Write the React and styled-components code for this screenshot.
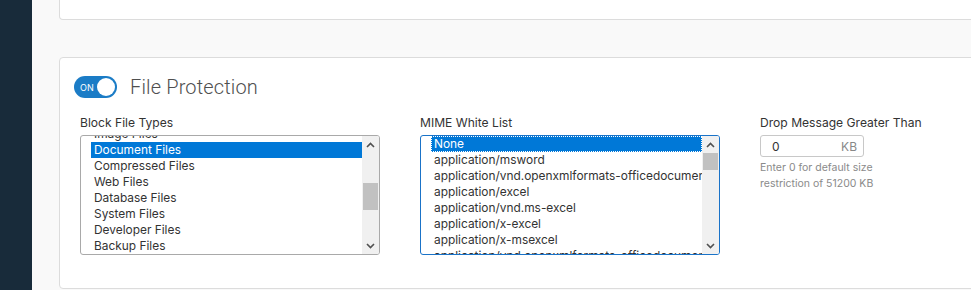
import React from "react";
import styled, { createGlobalStyle } from "styled-components";

const GlobalStyle = createGlobalStyle`
  html, body {
    margin: 0;
    padding: 0;
    background: #f9f9f9;
    overflow: hidden;
  }
  body {
    font-family: Inter, Roboto, "Liberation Sans", sans-serif;
    color: #333;
  }
`;

const Page = styled.div`
  display: flex;
  height: 290px;
  width: 971px;
  overflow: hidden;
`;

const Sidebar = styled.div`
  width: 32px;
  flex: none;
  background: #182b3a;
`;

const Main = styled.div`
  flex: 1;
  padding-left: 27px;
  display: flex;
  flex-direction: column;
  gap: 37px;
  margin-right: -10px;
`;

const TopCard = styled.div`
  height: 19px;
  background: #fff;
  border: 1px solid #dcdcdc;
  border-top: none;
  border-radius: 0 0 4px 4px;
`;

const Card = styled.div`
  height: 232px;
  background: #fff;
  border: 1px solid #dcdcdc;
  border-radius: 4px;
  padding: 17px 0 0 14px;
  box-sizing: border-box;
`;

const Header = styled.div`
  display: flex;
  align-items: center;
  gap: 13px;
  height: 24px;
`;

const Toggle = styled.div`
  width: 43px;
  height: 22px;
  border-radius: 11px;
  background: #1b7cc6;
  display: flex;
  align-items: center;
  justify-content: space-between;
  padding: 0 2px 0 6px;
  box-sizing: border-box;
  color: #fff;
  font-size: 9px;
`;

const Knob = styled.div`
  width: 18px;
  height: 18px;
  border-radius: 50%;
  background: #fff;
`;

const Title = styled.h2`
  margin: 0;
  font-family: Roboto, "Liberation Sans", sans-serif;
  font-size: 20px;
  font-weight: 300;
  color: #4f4f4f;
  letter-spacing: 0.15px;
`;

const Fields = styled.div`
  display: grid;
  grid-template-columns: 300px 300px 1fr;
  column-gap: 40px;
  margin: 16px 0 0 6px;
`;

const Field = styled.div`
  display: flex;
  flex-direction: column;
`;

const Label = styled.div`
  font-size: 12.1px;
  color: #333;
  line-height: 16px;
  margin-bottom: 4px;
`;

const ListBox = styled.div`
  height: 120px;
  box-sizing: border-box;
  border: 1px solid ${({ $focused }) => ($focused ? "#1a73c8" : "#a9a9a9")};
  border-radius: 3px;
  display: flex;
  overflow: hidden;
  background: #fff;
`;

const Options = styled.div`
  flex: 1;
  padding-left: 10px;
  overflow: hidden;
`;

const OptionTrack = styled.div`
  margin-top: ${({ $offset }) => $offset}px;
`;

const Option = styled.div`
  height: 16px;
  line-height: 16px;
  font-size: 11.9px;
  padding-left: 3px;
  white-space: nowrap;
  overflow: hidden;
  box-sizing: border-box;
  color: ${({ $selected }) => ($selected ? "#fff" : "#333")};
  background: ${({ $selected }) => ($selected ? "#0078d7" : "transparent")};
  outline: ${({ $focus }) => ($focus ? "1px dotted #fff" : "none")};
  outline-offset: -1px;
`;

const Scrollbar = styled.div`
  width: 17px;
  flex: none;
  background: #f0f0f0;
  position: relative;
  display: flex;
  flex-direction: column;
  justify-content: space-between;
  align-items: center;
`;

const Arrow = styled.div`
  height: 17px;
  display: flex;
  align-items: center;
  justify-content: center;
`;

const Thumb = styled.div`
  position: absolute;
  left: 1px;
  right: 1px;
  background: #c1c1c1;
`;

const InputBox = styled.div`
  width: 104px;
  height: 22px;
  box-sizing: border-box;
  border: 1px solid #c8c8c8;
  border-radius: 3px;
  display: flex;
  align-items: center;
  justify-content: space-between;
  padding: 0 6px 0 11px;
  font-size: 12px;
`;

const Unit = styled.span`
  color: #888;
`;

const Help = styled.div`
  font-size: 10.5px;
  line-height: 16px;
  color: #8a8a8a;
  margin-top: 3px;
`;

const Chevron = ({ up }) => (
  <svg width="9" height="6" viewBox="0 0 9 6">
    <path
      d={up ? "M1 5 L4.5 1.5 L8 5" : "M1 1 L4.5 4.5 L8 1"}
      fill="none"
      stroke="#505050"
      strokeWidth="1.6"
    />
  </svg>
);

const Select = ({ items, selected, offset, thumbTop, thumbHeight, focused }) => (
  <ListBox $focused={focused}>
    <Options>
      <OptionTrack $offset={offset}>
        {items.map((item) => (
          <Option
            key={item}
            $selected={item === selected}
            $focus={focused && item === selected}
          >
            {item}
          </Option>
        ))}
      </OptionTrack>
    </Options>
    <Scrollbar>
      <Arrow>
        <Chevron up />
      </Arrow>
      <Thumb style={{ top: thumbTop, height: thumbHeight }} />
      <Arrow>
        <Chevron />
      </Arrow>
    </Scrollbar>
  </ListBox>
);

const fileTypes = [
  "Image Files",
  "Document Files",
  "Compressed Files",
  "Web Files",
  "Database Files",
  "System Files",
  "Developer Files",
  "Backup Files",
  "Audio Files",
];

const mimeTypes = [
  "None",
  "application/msword",
  "application/vnd.openxmlformats-officedocument.wordprocessingml.document",
  "application/excel",
  "application/vnd.ms-excel",
  "application/x-excel",
  "application/x-msexcel",
  "application/vnd.openxmlformats-officedocument.spreadsheetml.sheet",
];

export default function App() {
  return (
    <>
      <GlobalStyle />
      <Page>
        <Sidebar />
        <Main>
          <TopCard />
          <Card>
            <Header>
              <Toggle>
                ON
                <Knob />
              </Toggle>
              <Title>File Protection</Title>
            </Header>
            <Fields>
              <Field>
                <Label>Block File Types</Label>
                <Select
                  items={fileTypes}
                  selected="Document Files"
                  offset={-10}
                  thumbTop={47}
                  thumbHeight={27}
                />
              </Field>
              <Field>
                <Label>MIME White List</Label>
                <Select
                  items={mimeTypes}
                  selected="None"
                  offset={0}
                  thumbTop={17}
                  thumbHeight={17}
                  focused
                />
              </Field>
              <Field>
                <Label>Drop Message Greater Than</Label>
                <InputBox>
                  0<Unit>KB</Unit>
                </InputBox>
                <Help>
                  Enter 0 for default size
                  <br />
                  restriction of 51200 KB
                </Help>
              </Field>
            </Fields>
          </Card>
        </Main>
      </Page>
    </>
  );
}
